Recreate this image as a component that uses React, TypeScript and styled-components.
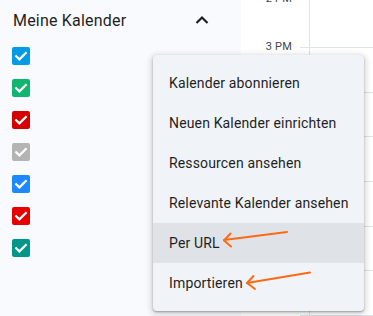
import React from "react";
import styled, { createGlobalStyle } from "styled-components";

const Global = createGlobalStyle`
  html, body { margin: 0; padding: 0; background: #ffffff; }
  body { font-family: Roboto, "Noto Sans", Arial, sans-serif; }
  * { box-sizing: border-box; }
`;

const Page = styled.div`
  position: relative;
  width: 373px;
  height: 316px;
  overflow: hidden;
  display: flex;
`;

const Sidebar = styled.aside`
  width: 241px;
  flex: none;
  background: #f8fafd;
  display: flex;
  flex-direction: column;
`;

const Header = styled.div`
  height: 40px;
  display: flex;
  align-items: center;
  justify-content: space-between;
  padding: 0 32px 0 13px;
`;

const Title = styled.span`
  font-size: 16px;
  color: #1f1f1f;
  letter-spacing: 0.2px;
`;

const List = styled.div`
  display: flex;
  flex-direction: column;
`;

const Row = styled.div`
  height: 32px;
  display: flex;
  align-items: center;
  padding-left: 12px;
`;

const Box = styled.span<{ $c: string }>`
  width: 18px;
  height: 18px;
  border-radius: 2px;
  background: ${(p) => p.$c};
  display: flex;
  align-items: center;
  justify-content: center;
`;

const Main = styled.div`
  flex: 1;
  display: flex;
  flex-direction: column;
  margin-top: -48px;
`;

const Hour = styled.div`
  height: 48px;
  display: flex;
`;

const TimeCol = styled.div`
  width: 59px;
  flex: none;
  display: flex;
  justify-content: flex-end;
  padding-right: 8px;
`;

const TimeLabel = styled.span`
  font-size: 11px;
  color: #444746;
  margin-top: 40px;
  height: 14px;
  line-height: 14px;
  letter-spacing: 0.2px;
`;

const Tick = styled.div`
  width: 9px;
  flex: none;
  border-bottom: 1px solid #dde3ea;
`;

const DayCell = styled.div`
  flex: 1;
  border-left: 1px solid #dde3ea;
  border-bottom: 1px solid #dde3ea;
`;

const Menu = styled.div`
  position: absolute;
  left: 153px;
  top: 55px;
  width: 211px;
  padding: 8px 0;
  background: #f0f4f9;
  border-radius: 4px;
  box-shadow: 0 1px 2px rgba(0, 0, 0, 0.3), 0 2px 6px 2px rgba(0, 0, 0, 0.15);
  display: flex;
  flex-direction: column;
`;

const Item = styled.div<{ $active?: boolean }>`
  height: 40px;
  display: flex;
  align-items: center;
  padding-left: 16px;
  font-size: 14px;
  letter-spacing: 0.15px;
  color: #1f1f1f;
  white-space: nowrap;
  background: ${(p) => (p.$active ? "#dfe3e7" : "transparent")};
`;

const Arrows = styled.svg`
  position: absolute;
  left: 0;
  top: 0;
  pointer-events: none;
`;

const colors = ["#039be5", "#10b66f", "#d50000", "#b4b4b4", "#1e88ff", "#e60000", "#009688"];
const items = [
  "Kalender abonnieren",
  "Neuen Kalender einrichten",
  "Ressourcen ansehen",
  "Relevante Kalender ansehen",
  "Per URL",
  "Importieren",
];
const hours = ["2 PM", "3 PM", "", "", "", "", "", ""];

const Check = () => (
  <svg width="18" height="18" viewBox="0 0 18 18">
    <path d="M4.2 9.3 L7.4 12.4 L13.8 6" fill="none" stroke="#fff" strokeWidth="2.2" strokeLinecap="square" />
  </svg>
);

export default function App() {
  return (
    <>
      <Global />
      <Page>
        <Sidebar>
          <Header>
            <Title>Meine Kalender</Title>
            <svg width="14" height="10" viewBox="0 0 14 10">
              <path d="M1.5 8 L7 2.5 L12.5 8" fill="none" stroke="#1f1f1f" strokeWidth="2.2" />
            </svg>
          </Header>
          <List>
            {colors.map((c) => (
              <Row key={c}>
                <Box $c={c}>
                  <Check />
                </Box>
              </Row>
            ))}
          </List>
        </Sidebar>
        <Main>
          {hours.map((h, i) => (
            <Hour key={i}>
              <TimeCol>{h && <TimeLabel>{h}</TimeLabel>}</TimeCol>
              <Tick />
              <DayCell />
            </Hour>
          ))}
        </Main>
        <Menu>
          {items.map((t) => (
            <Item key={t} $active={t === "Per URL"}>
              {t}
            </Item>
          ))}
        </Menu>
        <Arrows width="373" height="316" viewBox="0 0 373 316">
          <g fill="none" stroke="#ff6a13" strokeWidth="2" strokeLinecap="round" strokeLinejoin="round">
            <path d="M287 232 L224 240" />
            <path d="M230.5 233.5 L224 240.5 L231 246.5" />
            <path d="M310 272.5 L247 283" />
            <path d="M253.5 276 L247 283 L255 289" />
          </g>
        </Arrows>
      </Page>
    </>
  );
}
